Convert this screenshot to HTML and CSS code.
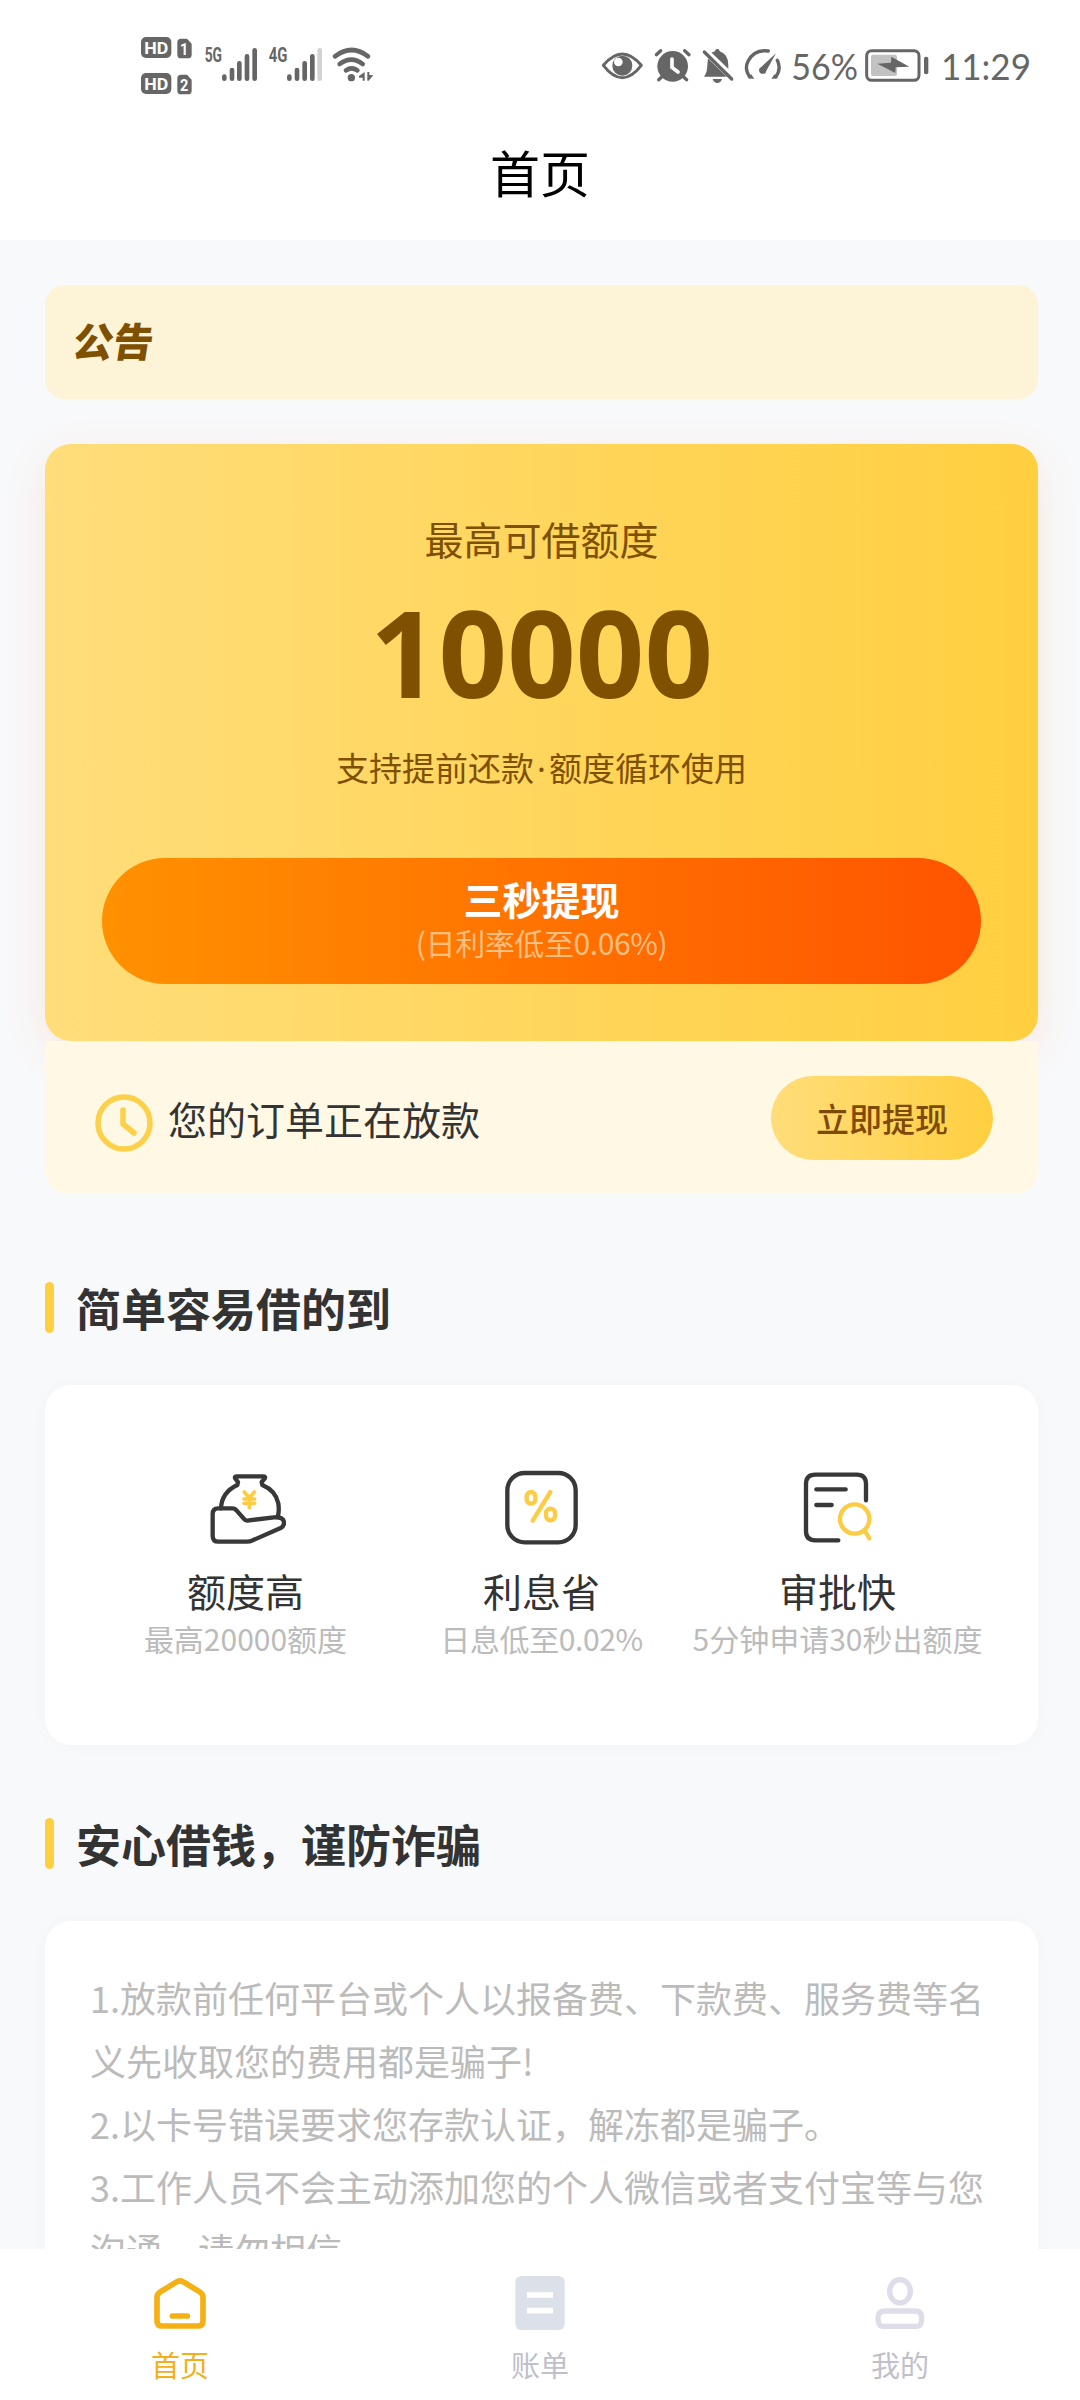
FILE: index.html
```html
<!DOCTYPE html>
<html lang="zh-CN">
<head>
<meta charset="utf-8">
<title>首页</title>
<link rel="stylesheet" href="styles.css">
</head>
<body>
<div class="app">
  <header class="header">
    <div class="status">
      <svg class="status-left" viewBox="0 0 810 270" fill="#666">
        <rect x="63" y="51" width="91" height="63" rx="15"/>
        <rect x="63" y="159" width="91" height="63" rx="15"/>
        <path d="M183 56h18l14 15v33q0 11-11 11h-21q-11 0-11-11V67q0-11 11-11zM183 164h18l14 15v33q0 11-11 11h-21q-11 0-11-11v-37q0-11 11-11z"/>
        <g class="badge-text" fill="#fff">
          <text x="73" y="101" textLength="72" lengthAdjust="spacingAndGlyphs">HD</text>
          <text x="73" y="209" textLength="72" lengthAdjust="spacingAndGlyphs">HD</text>
          <text x="180" y="106" textLength="25" lengthAdjust="spacingAndGlyphs">1</text>
          <text x="180" y="213" textLength="25" lengthAdjust="spacingAndGlyphs">2</text>
        </g>
        <g class="network-text">
          <text x="254" y="127" textLength="52" lengthAdjust="spacingAndGlyphs">5G</text>
          <text x="446" y="127" textLength="56" lengthAdjust="spacingAndGlyphs">4G</text>
        </g>
        <g stroke="#666" stroke-width="14" stroke-linecap="round">
          <path d="M313 170v6M336 150v26M358 130v46M381 109v67M404 91v85"/>
          <path d="M508 170v6M531 150v26M554 130v46M577 109v67"/>
          <path d="M599 91v85" stroke="#d2d2d2"/>
        </g>
        <g fill="none" stroke="#666" stroke-width="14" stroke-linecap="round">
          <path d="M645 109q50-38 99 0M659 132q35-26 69 0M678 151q17-12 34 0"/>
        </g>
        <circle cx="694" cy="173" r="11"/>
        <path d="M734 156v26h-6v-9h-11v-5zM742 156h6v9l12 1-14 16h-4z"/>
      </svg>
      <svg class="status-right" viewBox="0 0 1380 240" fill="#666">
        <path d="M40 106q57-68 114 0q-57 74-114 0z" fill="none" stroke="#666" stroke-width="9" stroke-linejoin="round"/>
        <circle cx="97" cy="107" r="30"/><circle cx="85" cy="96" r="13" fill="#fff"/>
        <circle cx="248" cy="109" r="46"/>
        <path d="M199 74l13-12M297 74l-13-12M215 141l-9 8M281 141l9 8" stroke="#666" stroke-width="10" stroke-linecap="round"/>
        <path d="M246 87v25l18 14" stroke="#fff" stroke-width="11" fill="none" stroke-linecap="round"/>
        <path d="M342 140q10-13 10-35 0-38 23-41 0-7 7-7t7 7q26 9 26 41v35z"/>
        <path d="M368 147h28q-4 12-14 12t-14-12z"/>
        <path d="M340 58l92 89" stroke="#fff" stroke-width="20"/>
        <path d="M343 66l82 81" stroke="#666" stroke-width="10" stroke-linecap="round"/>
        <path d="M480 141q-18-23-6-47 19-37 61-31M562 91q13 26-5 50" fill="none" stroke="#666" stroke-width="10" stroke-linecap="round"/>
        <path d="M473 144l20 3-9-14zM564 144l-20 3 9-14zM558 70l-29 52a11 11 0 1 1-14-12z"/>
        <rect x="830" y="62" width="157" height="89" rx="15" fill="none" stroke="#666" stroke-width="9"/>
        <rect x="843" y="74" width="78" height="64" rx="6" fill="#c2c2c2"/>
        <path d="M862 101l41-3 1-18 54 30-41 2-1 17z"/>
        <rect x="1002" y="80" width="13" height="53" rx="6"/>
        <g class="clock-text">
          <text x="604" y="150" textLength="200" lengthAdjust="spacingAndGlyphs">56%</text>
          <text x="1053" y="150" textLength="270" lengthAdjust="spacingAndGlyphs">11:29</text>
        </g>
      </svg>
    </div>
    <h1 class="page-title">首页</h1>
  </header>

  <main class="content">
    <section class="notice"><span class="notice-label">公告</span></section>

    <section class="quota">
      <p class="quota-caption">最高可借额度</p>
      <p class="quota-amount">10000</p>
      <p class="quota-note">支持提前还款<span class="dot">·</span>额度循环使用</p>
      <button class="withdraw">
        <span class="withdraw-title">三秒提现</span>
        <span class="withdraw-rate">(日利率低至0.06%)</span>
      </button>
    </section>

    <section class="order">
      <svg class="order-icon" viewBox="0 0 60 60" fill="none" stroke="#fdd04a" stroke-linecap="round" stroke-linejoin="round">
        <circle cx="30" cy="30" r="26" stroke-width="5.5"/>
        <path d="M29 17v14l11 9" stroke-width="5.5"/>
      </svg>
      <span class="order-text">您的订单正在放款</span>
      <button class="order-btn">立即提现</button>
    </section>

    <h2 class="section-title">简单容易借的到</h2>
    <section class="features">
      <div class="feature">
        <svg class="feature-icon" viewBox="0 0 240 240" fill="none" stroke="#383838" stroke-width="13" stroke-linecap="round" stroke-linejoin="round">
          <g transform="translate(2 5)">
            <path d="M43 110q2-48 49-70l2-9-8-10q-4-7 5-7h78q9 0 5 7l-9 10 2 9q40 17 48 55 3 22-1 37"/>
            <path d="M34 110h43q8 0 13 7l24 27q5 4 13 2l75-9q29-2 30 15 1 11-10 17l-84 37q-8 4-18 4H35q-17 0-17-18v-65q0-17 16-17z"/>
            <path d="M113 61l15 18 15-18M112 82h32M112 95h32M128 79v29" stroke="#fccc45" stroke-width="11"/>
          </g>
        </svg>
        <strong>额度高</strong><span>最高20000额度</span>
      </div>
      <div class="feature">
        <svg class="feature-icon" viewBox="0 0 240 240">
          <rect x="16" y="9" width="205" height="208" rx="52" fill="none" stroke="#383838" stroke-width="13"/>
          <g fill="none" stroke="#fccc45" stroke-width="13" stroke-linecap="round" transform="translate(-2 7)">
            <rect x="76" y="59" width="26" height="35" rx="13"/><rect x="134" y="109" width="27" height="35" rx="13"/><path d="M147 59l-53 86"/>
          </g>
        </svg>
        <strong>利息省</strong><span class="tight">日息低至0.02%</span>
      </div>
      <div class="feature">
        <svg class="feature-icon" viewBox="0 0 240 240" fill="none" stroke="#383838" stroke-width="13" stroke-linecap="round">
          <g transform="translate(-2 0)">
            <path d="M206 91V42q0-28-28-28H54q-28 0-28 28v142q0 27 28 27h69M57 58h88M57 105h46"/>
            <circle cx="172" cy="147" r="44" stroke="#fccc45"/><path d="M203 183l13 22" stroke="#fccc45"/>
          </g>
        </svg>
        <strong>审批快</strong><span>5分钟申请30秒出额度</span>
      </div>
    </section>

    <h2 class="section-title second">安心借钱，谨防诈骗</h2>
    <section class="tips">
      <p>1.放款前任何平台或个人以报备费、下款费、服务费等名<br>义先收取您的费用都是骗子!</p>
      <p>2.以卡号错误要求您存款认证，解冻都是骗子。</p>
      <p>3.工作人员不会主动添加您的个人微信或者支付宝等与您<br>沟通，请勿相信</p>
    </section>
  </main>

  <nav class="tabs">
    <a class="tab active">
      <svg class="tab-icon" viewBox="0 0 180 180" fill="none" stroke="#f5b015" stroke-width="17" stroke-linecap="round" stroke-linejoin="round">
        <path d="M81 26q9-5 18 0l49 30q11 7 11 17v70q0 16-16 16H37q-16 0-16-16V73q0-10 11-17z"/><path d="M67 129h45"/>
      </svg>
      <span>首页</span>
    </a>
    <a class="tab">
      <svg class="tab-icon" viewBox="0 0 180 180">
        <rect x="16" y="9" width="148" height="162" rx="17" fill="#dbe0e9"/><path d="M51 66h78M51 113h78" stroke="#fff" stroke-width="17"/>
      </svg>
      <span>账单</span>
    </a>
    <a class="tab">
      <svg class="tab-icon" viewBox="0 0 180 180" fill="none" stroke="#dedde9" stroke-width="16">
        <ellipse cx="90" cy="55" rx="31" ry="35"/><path d="M47 114h86q22 0 22 20 0 26-14 26H38q-14 0-14-26 0-20 23-20z"/>
      </svg>
      <span>我的</span>
    </a>
  </nav>
</div>
</body>
</html>
```
FILE: styles.css
```css
* { box-sizing: border-box; }
body, p, h1, h2 { margin: 0; }
body { font-family: "Noto Sans CJK SC", sans-serif; color: #333; }
button { border: 0; font-family: inherit; }

.app {
  display: flex;
  flex-direction: column;
  width: 1080px;
  height: 2400px;
  background: #f8f9fb;
  overflow: hidden;
}

.header { flex: none; height: 240px; background: #fff; }
.status {
  display: flex;
  justify-content: space-between;
  height: 131px;
  padding: 20px 30px 0 120px;
}
.status-left { width: 270px; height: 90px; }
.status-right { width: 460px; height: 80px; margin-top: 10px; }
.badge-text { font: bold 50px Roboto, sans-serif; }
.network-text { font: bold 58px Roboto, sans-serif; }
.clock-text { font: 108px Lato, sans-serif; }
.page-title {
  font-size: 50px;
  font-weight: 400;
  line-height: 80px;
  text-align: center;
  color: #000;
}

.content {
  flex: 1;
  min-height: 0;
  overflow: hidden;
  padding: 45px 42px 0 45px;
}

.notice {
  display: flex;
  align-items: center;
  height: 114px;
  margin-bottom: 45px;
  padding: 0 0 5px 29px;
  border-radius: 20px;
  background: #fdf3d7;
}
.notice-label {
  font-size: 40px;
  font-weight: 900;
  line-height: 60px;
  color: #7e5000;
  transform: skewX(-9deg);
}

.quota {
  display: flex;
  flex-direction: column;
  align-items: center;
  height: 597px;
  padding: 65px 57px 0;
  border-radius: 26px;
  background: linear-gradient(90deg, #ffdd7a, #ffcf40);
  box-shadow: 0 12px 40px rgba(255, 120, 40, .14);
  color: #7e5000;
}
.quota-caption { font-size: 39px; line-height: 58px; }
.quota-amount {
  margin-top: 3px;
  font-family: "Noto Sans", sans-serif;
  font-size: 120px;
  font-weight: 700;
  line-height: 164px;
}
.quota-note { height: 48px; margin-top: 9px; font-size: 33px; line-height: 48px; }
.dot { display: inline-block; width: 15px; font-family: "Noto Sans", sans-serif; line-height: 1; text-align: center; }
.withdraw {
  display: flex;
  flex-direction: column;
  align-items: center;
  width: 879px;
  height: 126px;
  margin-top: 67px;
  padding: 17px 0 0;
  border-radius: 63px;
  background: linear-gradient(90deg, #ff9100, #ff5400);
}
.withdraw-title { font-size: 39px; font-weight: 700; line-height: 46px; color: #fff; }
.withdraw-rate { font-size: 30px; line-height: 42px; letter-spacing: -.4px; color: #ffbf80; }

.order {
  position: relative;
  display: flex;
  align-items: center;
  height: 153px;
  padding: 0 45px 0 49px;
  border-radius: 0 0 24px 24px;
  background: #fff8e4;
}
.order-icon { width: 60px; height: 60px; margin-top: 10px; }
.order-text { flex: 1; margin: 1px 0 0 14px; font-size: 39px; line-height: 58px; }
.order-btn {
  width: 222px;
  height: 84px;
  padding: 0;
  border-radius: 42px;
  background: linear-gradient(90deg, #ffdd7a, #ffcf40);
  font-size: 33px;
  font-weight: 500;
  color: #7e4a08;
}

.section-title {
  display: flex;
  align-items: center;
  gap: 22px;
  height: 51px;
  margin-top: 88px;
  font-size: 45px;
  line-height: 48px;
}
.section-title::before { content: ""; width: 9px; height: 51px; border-radius: 5px; background: #fdd040; }
.section-title.second { margin-top: 73px; }

.features {
  display: grid;
  grid-template-columns: repeat(3, 296px);
  justify-content: center;
  height: 360px;
  margin-top: 52px;
  padding-top: 84px;
  border-radius: 26px;
  background: #fff;
  box-shadow: 0 0 20px rgba(60, 70, 100, .025);
}
.feature { display: flex; flex-direction: column; align-items: center; white-space: nowrap; }
.feature-icon { width: 80px; height: 80px; margin-top: 1px; }
.feature strong { margin-top: 12px; font-size: 39px; font-weight: 400; line-height: 56px; }
.feature span { margin-top: 1px; font-size: 30px; line-height: 38px; color: #bbb; }
.feature .tight { letter-spacing: -.4px; }

.tips {
  height: 500px;
  margin-top: 52px;
  padding: 45px 0 0 45px;
  border-radius: 26px;
  background: #fff;
  box-shadow: 0 0 20px rgba(60, 70, 100, .025);
  font-size: 36px;
  line-height: 63px;
  color: #bbb;
  white-space: nowrap;
}

.tabs { flex: none; display: flex; height: 151px; background: #fff; }
.tab {
  flex: 1;
  display: flex;
  flex-direction: column;
  align-items: center;
  padding-top: 24px;
  color: #c0c0cb;
}
.tab.active { color: #f2b01c; }
.tab-icon { width: 60px; height: 60px; }
.tab span { margin-top: 9px; font-size: 29px; line-height: 44px; }
```
